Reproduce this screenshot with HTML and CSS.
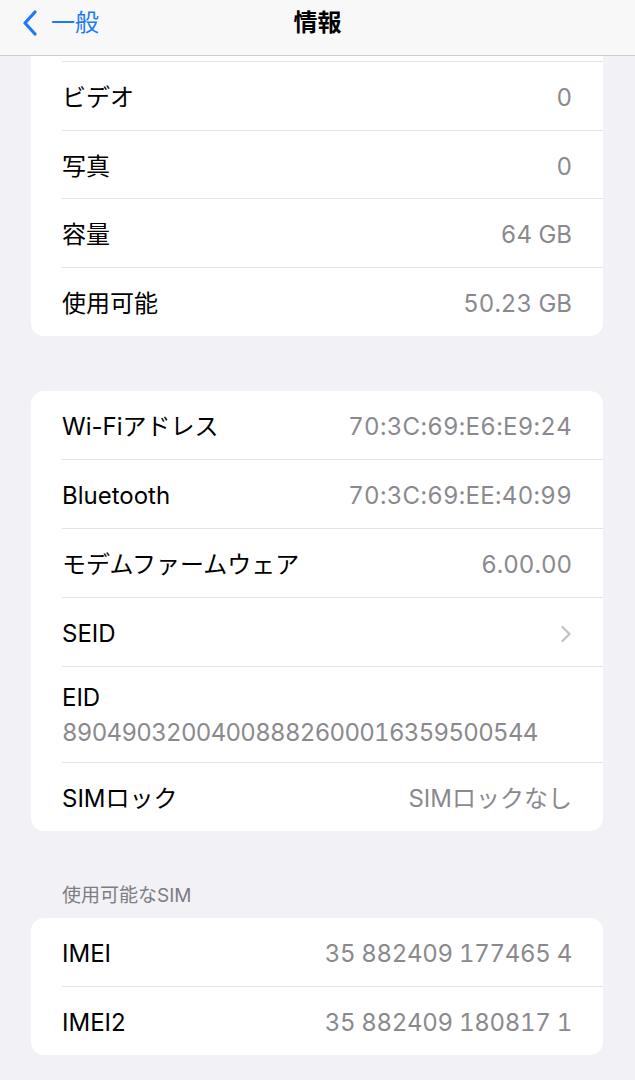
FILE: index.html
```html
<!DOCTYPE html>
<html lang="ja">
<head>
<meta charset="utf-8">
<title>情報</title>
<link rel="stylesheet" href="styles.css">
</head>
<body>
<header class="nav">
  <div class="nav-back">
    <svg class="back-chev" width="16" height="26" viewBox="0 0 16 26"><path d="M13 2 L3 13 L13 24" fill="none" stroke="#1a7af8" stroke-width="3.2" stroke-linecap="round" stroke-linejoin="round"/></svg>
    <span class="back-text">一般</span>
  </div>
  <div class="nav-title">情報</div>
  <div class="nav-spacer"></div>
</header>
<main class="content">
  <section class="card card-cut">
    <div class="row row-top"><span class="label">ビデオ</span><span class="value">0</span></div>
    <div class="row row-short"><span class="label">写真</span><span class="value">0</span></div>
    <div class="row"><span class="label">容量</span><span class="value">64 GB</span></div>
    <div class="row"><span class="label">使用可能</span><span class="value">50.23 GB</span></div>
  </section>

  <section class="card card-gap">
    <div class="row"><span class="label">Wi-Fiアドレス</span><span class="value value-mac">70:3C:69:E6:E9:24</span></div>
    <div class="row"><span class="label">Bluetooth</span><span class="value value-mac">70:3C:69:EE:40:99</span></div>
    <div class="row"><span class="label">モデムファームウェア</span><span class="value">6.00.00</span></div>
    <div class="row"><span class="label">SEID</span><svg class="chev" width="12" height="20" viewBox="0 0 12 20"><path d="M2.5 3 L9.5 10 L2.5 17" fill="none" stroke="#c4c4c8" stroke-width="2.4" stroke-linecap="round" stroke-linejoin="round"/></svg></div>
    <div class="row row-stack"><span class="label">EID</span><span class="value value-eid">89049032004008882600016359500544</span></div>
    <div class="row"><span class="label">SIMロック</span><span class="value">SIMロックなし</span></div>
  </section>

  <h2 class="section-head">使用可能なSIM</h2>
  <section class="card">
    <div class="row"><span class="label">IMEI</span><span class="value value-imei">35 882409 177465 4</span></div>
    <div class="row"><span class="label">IMEI2</span><span class="value value-imei">35 882409 180817 1</span></div>
  </section>
</main>
</body>
</html>
```

FILE: styles.css
```css
* { box-sizing: border-box; }
html, body {
  margin: 0;
  padding: 0;
  background: #f1f1f6;
  font-family: "Inter", "Noto Sans CJK JP", sans-serif;
  -webkit-font-smoothing: antialiased;
}
.nav {
  height: 56px;
  background: #f8f8f9;
  border-bottom: 1px solid #cdcdd1;
  display: grid;
  grid-template-columns: 1fr auto 1fr;
  align-items: center;
  padding: 0 0 10px 0;
}
.nav-back {
  display: flex;
  align-items: center;
  padding-left: 22px;
  gap: 13px;
}
.back-text {
  color: #1a7af8;
  font-size: 24px;
  line-height: 30px;
}
.nav-title {
  font-size: 24px;
  font-weight: 700;
  color: #000;
  line-height: 30px;
}
.content {
  padding: 0 32px 40px 31px;
}
.card {
  background: #fff;
  border-radius: 13px;
  overflow: hidden;
}
.card-cut {
  border-top-left-radius: 0;
  border-top-right-radius: 0;
  padding-top: 5px;
}
.card-gap {
  margin-top: 55px;
}
.row {
  margin-left: 31px;
  padding-right: 31px;
  padding-top: 4px;
  height: 69px;
  border-top: 1px solid #e3e3e6;
  display: flex;
  align-items: center;
  justify-content: space-between;
}
.row:first-child { border-top: none; height: 68px; }
.card-cut .row-top { border-top: 1px solid #e3e3e6; height: 69px; }
.card-cut .row-short { height: 68px; }
.label {
  font-size: 24px;
  color: #000;
  line-height: 30px;
  letter-spacing: 0;
}
.value {
  font-size: 24px;
  color: #8a8a8e;
  line-height: 30px;
  font-variant-numeric: tabular-nums;
  letter-spacing: 0;
}
.value-mac { letter-spacing: 0.3px; }
.value-eid { letter-spacing: -0.7px; }
.value-imei { letter-spacing: -0.3px; }
.row-stack {
  height: 96px;
  flex-direction: column;
  align-items: flex-start;
  justify-content: flex-start;
  padding-top: 16px;
  gap: 5px;
}
.chev { display: block; }
.section-head {
  margin: 53px 0 10px 0;
  padding-left: 31px;
  font-size: 19px;
  line-height: 24px;
  font-weight: 400;
  color: #7d7d82;
}
```
